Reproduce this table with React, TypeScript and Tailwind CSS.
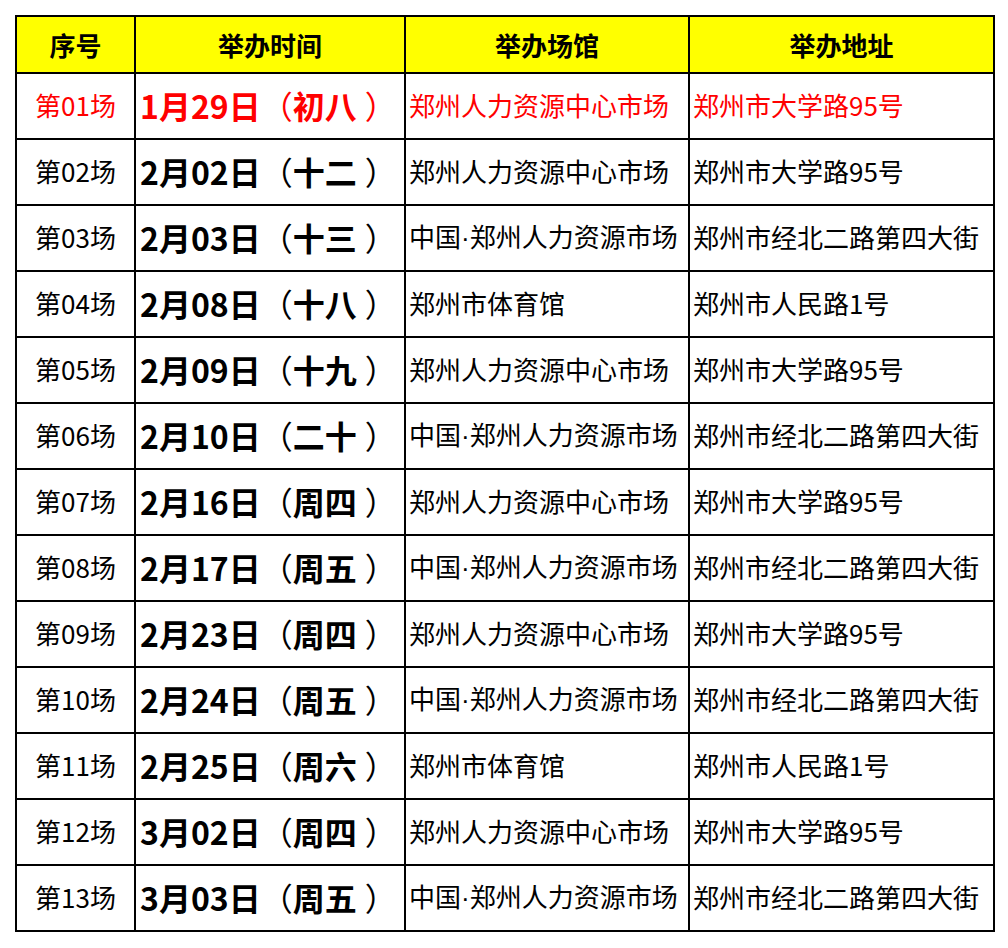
import React from "react";

type Row = {
  no: string;
  date: string;
  day: string;
  venue: string;
  addr: string;
  hot?: boolean;
};

const rows: Row[] = [
  { no: "第01场", date: "1月29日", day: "初八", venue: "郑州人力资源中心市场", addr: "郑州市大学路95号", hot: true },
  { no: "第02场", date: "2月02日", day: "十二", venue: "郑州人力资源中心市场", addr: "郑州市大学路95号" },
  { no: "第03场", date: "2月03日", day: "十三", venue: "中国·郑州人力资源市场", addr: "郑州市经北二路第四大街" },
  { no: "第04场", date: "2月08日", day: "十八", venue: "郑州市体育馆", addr: "郑州市人民路1号" },
  { no: "第05场", date: "2月09日", day: "十九", venue: "郑州人力资源中心市场", addr: "郑州市大学路95号" },
  { no: "第06场", date: "2月10日", day: "二十", venue: "中国·郑州人力资源市场", addr: "郑州市经北二路第四大街" },
  { no: "第07场", date: "2月16日", day: "周四", venue: "郑州人力资源中心市场", addr: "郑州市大学路95号" },
  { no: "第08场", date: "2月17日", day: "周五", venue: "中国·郑州人力资源市场", addr: "郑州市经北二路第四大街" },
  { no: "第09场", date: "2月23日", day: "周四", venue: "郑州人力资源中心市场", addr: "郑州市大学路95号" },
  { no: "第10场", date: "2月24日", day: "周五", venue: "中国·郑州人力资源市场", addr: "郑州市经北二路第四大街" },
  { no: "第11场", date: "2月25日", day: "周六", venue: "郑州市体育馆", addr: "郑州市人民路1号" },
  { no: "第12场", date: "3月02日", day: "周四", venue: "郑州人力资源中心市场", addr: "郑州市大学路95号" },
  { no: "第13场", date: "3月03日", day: "周五", venue: "中国·郑州人力资源市场", addr: "郑州市经北二路第四大街" },
];

const font = { fontFamily: '"Noto Sans CJK SC", "Noto Sans", sans-serif' };

// the dot in 中国·郑州 is narrow in the original, Noto CJK draws it full width
function Venue({ text }: { text: string }) {
  const parts = text.split("·");
  if (parts.length < 2) return <>{text}</>;
  return (
    <>
      {parts[0]}
      <span className="font-['Liberation_Sans',sans-serif]">·</span>
      {parts[1]}
    </>
  );
}

export default function App() {
  return (
    <div className="min-h-[948px] bg-white pl-[15px] pt-[15px]" style={font}>
      <table className="w-[978px] table-fixed border-collapse border-2 border-black leading-none">
        <colgroup>
          <col className="w-[119px]" />
          <col className="w-[270px]" />
          <col className="w-[284px]" />
          <col className="w-[305px]" />
        </colgroup>
        <thead>
          <tr className="h-[57px] bg-[#ffff00] text-[26px] font-bold text-black">
            <th className="border-2 border-black text-center">序号</th>
            <th className="border-2 border-black text-center">举办时间</th>
            <th className="border-2 border-black text-center">举办场馆</th>
            <th className="border-2 border-black text-center">举办地址</th>
          </tr>
        </thead>
        <tbody>
          {rows.map((r) => (
            <tr
              key={r.no}
              className={`h-[66px] ${r.hot ? "text-[#ff0000]" : "text-black"}`}
            >
              <td className="border-2 border-black pb-[3px] text-center text-[26px]">{r.no}</td>
              <td className="whitespace-nowrap border-2 border-black pb-[3px] pl-[4px] text-[32px]">
                <span className="font-bold">{r.date}</span>
                <span className="font-normal">（</span>
                <span className="font-bold">{r.day}</span>
                <span className="ml-[8px] font-normal">）</span>
              </td>
              <td className="whitespace-nowrap border-2 border-black pb-[3px] pl-[3px] text-[26px]">
                <Venue text={r.venue} />
              </td>
              <td className="whitespace-nowrap border-2 border-black pb-[3px] pl-[3px] text-[26px]">{r.addr}</td>
            </tr>
          ))}
        </tbody>
      </table>
    </div>
  );
}
